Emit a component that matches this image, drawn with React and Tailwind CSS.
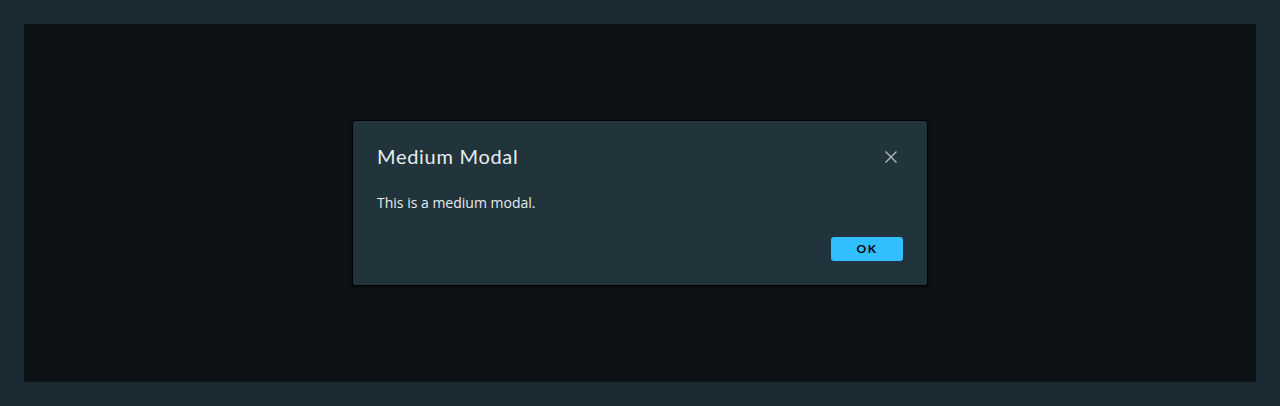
export default function App() {
  return (
    <div className="h-[406px] w-full bg-[#1b2a32] p-6" style={{ fontFamily: "Lato, 'Noto Sans', sans-serif" }}>
      <div className="flex h-full w-full items-center justify-center bg-[#0c1215]">
        <div className="flex w-[576px] flex-col rounded-[3px] border border-[#000000] bg-[#21333b] px-6 pb-6 pt-6 shadow-[0_1px_3px_rgba(0,0,0,0.5)]">
          <div className="flex h-6 items-center justify-between">
            <h3 className="-mt-[2px] text-[20px] leading-6 tracking-[0.035em] text-[#e9ecef]">Medium Modal</h3>
            <button type="button" className="flex h-6 w-6 items-center justify-center text-[#adbbc4]">
              <svg width="14" height="14" viewBox="0 0 14 14" fill="none" stroke="currentColor" strokeWidth="1.4">
                <path d="M1.5 1.5 L12.5 12.5 M12.5 1.5 L1.5 12.5" />
              </svg>
            </button>
          </div>
          <p className="mt-[22px] text-[14px] leading-6 text-[#e9ecef]" style={{ fontFamily: "'Open Sans', sans-serif" }}>
            This is a medium modal.
          </p>
          <div className="mt-[22px] flex justify-end">
            <button
              type="button"
              className="h-6 w-[72px] rounded-[3px] bg-[#30c0ff] text-[12px] font-bold uppercase tracking-[0.12em] text-[#000000]"
            >
              OK
            </button>
          </div>
        </div>
      </div>
    </div>
  );
}
